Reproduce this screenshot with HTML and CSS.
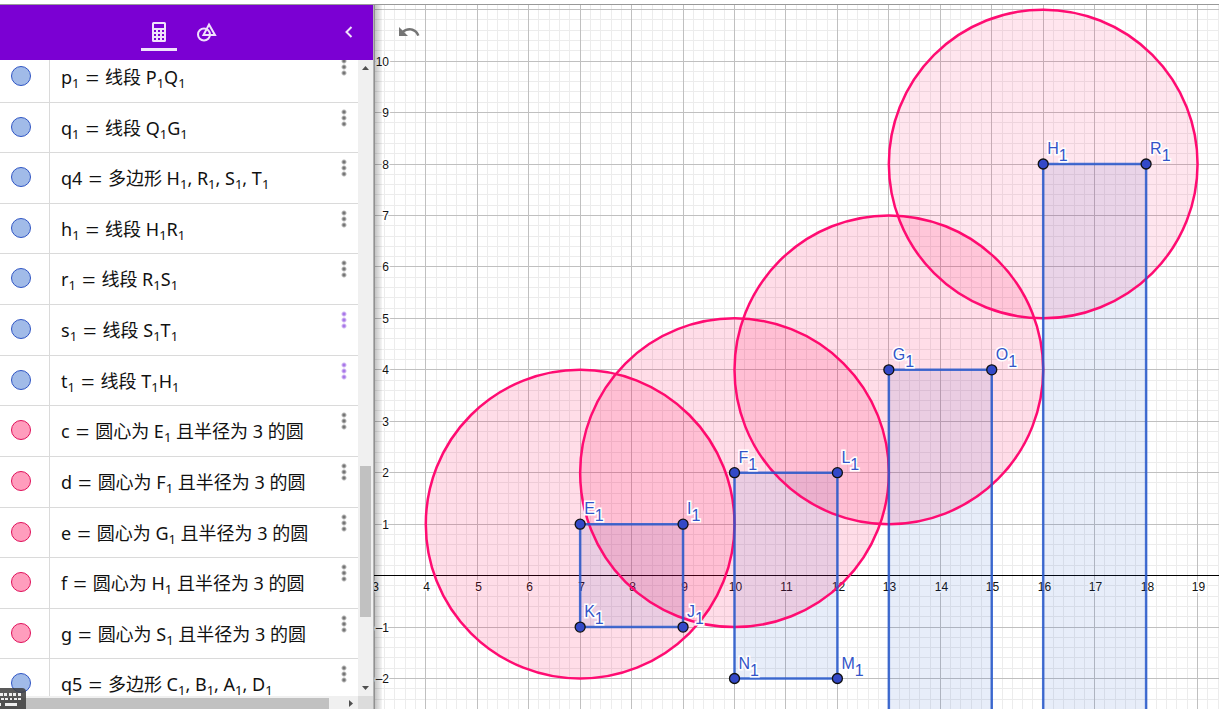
FILE: index.html
```
<!DOCTYPE html>
<html lang="zh-CN">
<head>
<meta charset="utf-8">
<title>GeoGebra</title>
<link rel="stylesheet" href="styles.css">
</head>
<body>
<div class="topbar"></div>
<div class="app">
  <aside class="panel">
    <header class="header">
      <nav class="tabs">
        <button class="tab tab-active" type="button" aria-label="代数">
          <svg width="24" height="24" viewBox="0 0 24 24"><path fill="currentColor" fill-rule="evenodd" d="M6.500 2h11A1.500 1.500 0 0 1 19 3.500v17a1.500 1.500 0 0 1-1.500 1.500h-11A1.500 1.500 0 0 1 5 20.500v-17A1.500 1.500 0 0 1 6.500 2zM7 4v4h10V4zM7 10v2h2v-2zM11 10v2h2v-2zM15 10v2h2v-2zM7 14v2h2v-2zM11 14v2h2v-2zM15 14v2h2v-2zM7 18v2h2v-2zM11 18v2h2v-2zM15 18v2h2v-2z"/></svg>
        </button>
        <button class="tab" type="button" aria-label="工具">
          <svg width="24" height="24" viewBox="0 0 24 24" fill="none" stroke="currentColor" stroke-width="2"><circle cx="9" cy="14.500" r="6"/><path d="M14 4.500L20 15H8.500z"/></svg>
        </button>
      </nav>
      <button class="collapse" type="button" aria-label="收起">
        <svg width="12" height="14" viewBox="0 0 12 14" fill="none" stroke="currentColor" stroke-width="2"><path d="M8.500 1L3.500 6l5 5"/></svg>
      </button>
    </header>
    <div class="body">
      <div class="viewport">
        <ul class="rows">
          <li class="row"><button class="marble" type="button" aria-label="显示 p1"></button><p class="def">p<sub>1</sub><i class="eq">=</i>线段 P<sub>1</sub>Q<sub>1</sub></p><button class="more" type="button" aria-label="更多"></button></li>
          <li class="row"><button class="marble" type="button" aria-label="显示 q1"></button><p class="def">q<sub>1</sub><i class="eq">=</i>线段 Q<sub>1</sub>G<sub>1</sub></p><button class="more" type="button" aria-label="更多"></button></li>
          <li class="row"><button class="marble" type="button" aria-label="显示 q4"></button><p class="def">q4<i class="eq">=</i>多边形 H<sub>1</sub>, R<sub>1</sub>, S<sub>1</sub>, T<sub>1</sub></p><button class="more" type="button" aria-label="更多"></button></li>
          <li class="row"><button class="marble" type="button" aria-label="显示 h1"></button><p class="def">h<sub>1</sub><i class="eq">=</i>线段 H<sub>1</sub>R<sub>1</sub></p><button class="more" type="button" aria-label="更多"></button></li>
          <li class="row"><button class="marble" type="button" aria-label="显示 r1"></button><p class="def">r<sub>1</sub><i class="eq">=</i>线段 R<sub>1</sub>S<sub>1</sub></p><button class="more" type="button" aria-label="更多"></button></li>
          <li class="row"><button class="marble" type="button" aria-label="显示 s1"></button><p class="def">s<sub>1</sub><i class="eq">=</i>线段 S<sub>1</sub>T<sub>1</sub></p><button class="more more-lit" type="button" aria-label="更多"></button></li>
          <li class="row"><button class="marble" type="button" aria-label="显示 t1"></button><p class="def">t<sub>1</sub><i class="eq">=</i>线段 T<sub>1</sub>H<sub>1</sub></p><button class="more more-lit" type="button" aria-label="更多"></button></li>
          <li class="row"><button class="marble marble-pink" type="button" aria-label="显示 c"></button><p class="def">c<i class="eq">=</i>圆心为 E<sub>1</sub> 且半径为 3 的圆</p><button class="more" type="button" aria-label="更多"></button></li>
          <li class="row"><button class="marble marble-pink" type="button" aria-label="显示 d"></button><p class="def">d<i class="eq">=</i>圆心为 F<sub>1</sub> 且半径为 3 的圆</p><button class="more" type="button" aria-label="更多"></button></li>
          <li class="row"><button class="marble marble-pink" type="button" aria-label="显示 e"></button><p class="def">e<i class="eq">=</i>圆心为 G<sub>1</sub> 且半径为 3 的圆</p><button class="more" type="button" aria-label="更多"></button></li>
          <li class="row"><button class="marble marble-pink" type="button" aria-label="显示 f"></button><p class="def">f<i class="eq">=</i>圆心为 H<sub>1</sub> 且半径为 3 的圆</p><button class="more" type="button" aria-label="更多"></button></li>
          <li class="row"><button class="marble marble-pink" type="button" aria-label="显示 g"></button><p class="def">g<i class="eq">=</i>圆心为 S<sub>1</sub> 且半径为 3 的圆</p><button class="more" type="button" aria-label="更多"></button></li>
          <li class="row"><button class="marble" type="button" aria-label="显示 q5"></button><p class="def">q5<i class="eq">=</i>多边形 C<sub>1</sub>, B<sub>1</sub>, A<sub>1</sub>, D<sub>1</sub></p><button class="more" type="button" aria-label="更多"></button></li>
        </ul>
      </div>
      <div class="vbar">
        <svg width="14" height="16" viewBox="0 0 14 16"><path fill="#505050" d="M4 10h7L7.500 6z"/></svg>
        <div class="vtrack"><div class="vthumb"></div></div>
        <svg width="14" height="16" viewBox="0 0 14 16"><path fill="#505050" d="M4 6h7L7.500 10z"/></svg>
      </div>
      <div class="hbar">
        <div class="hthumb"></div>
        <svg width="14" height="13" viewBox="0 0 14 13"><path fill="#505050" d="M5 4v7l4-3.500z"/></svg>
      </div>
      <div class="corner"></div>
    </div>
    <button class="keyboard" type="button" aria-label="键盘">
      <svg width="26" height="21" viewBox="0 0 26 21" fill="#eee"><path d="M0 5h3v3H0zM4 5h3v3H4zM9 5h3v3H9zM13 5h3v3h-3zM18 5h3v3h-3zM1 10h3v2H1zM5 10h3v2H5zM10 10h2v2h-2zM14 10h3v2h-3zM18 10h3v2h-3zM5 15h12v3H5zM0 15h1v3H0z"/></svg>
    </button>
  </aside>
  <main class="graphics">
    <svg class="plot" id="plot" role="img" aria-label="绘图区">
      <g id="grid"></g>
      <g id="axis"></g>
      <g transform="translate(-154 570.600)">
        <g class="boxes" transform="scale(51.450 -51.450)">
          <path d="M7 1h2v-2h-2z"/>
          <path d="M10 2h2v-4h-2z"/>
          <path d="M13 4h2v-12h-2z"/>
          <path d="M16 8h2v-16h-2z"/>
        </g>
        <g class="circles" transform="scale(51.450 -51.450)">
          <circle cx="7" cy="1" r="3"/>
          <circle cx="10" cy="2" r="3"/>
          <circle cx="13" cy="4" r="3"/>
          <circle class="pale" cx="16" cy="8" r="3"/>
        </g>
        <g class="edges" transform="scale(51.450 -51.450)">
          <path d="M7 1h2v-2h-2z"/>
          <path d="M10 2h2v-4h-2z"/>
          <path d="M13 4h2v-12h-2z"/>
          <path d="M16 8h2v-16h-2z"/>
        </g>
      </g>
      <g id="points"></g>
    </svg>
    <button class="undo" type="button" aria-label="撤销">
      <svg width="24" height="24" viewBox="0 0 24 24"><path fill="#757575" d="M12.500 8c-2.650 0-5.050.99-6.900 2.600L2 7v9h9l-3.620-3.620c1.390-1.160 3.160-1.880 5.120-1.880 3.540 0 6.550 2.310 7.600 5.500l2.370-.78C21.080 11.030 17.150 8 12.500 8z"/></svg>
    </button>
  </main>
</div>
<script src="plot.js"></script>
</body>
</html>
```
FILE: styles.css
```
* {
  box-sizing: border-box;
}

body {
  margin: 0;
  height: 100vh;
  display: flex;
  flex-direction: column;
  overflow: hidden;
  background: #fff;
  font-family: "Liberation Sans", "Noto Sans CJK SC", sans-serif;
}

button {
  border: 0;
  padding: 0;
  background: none;
}

svg {
  display: block;
}

.topbar {
  flex: none;
  height: 5px;
  border-bottom: 1px solid #999;
}

.app {
  flex: 1;
  min-height: 0;
  display: flex;
}

.panel {
  position: relative;
  flex: none;
  width: 374px;
  display: flex;
  flex-direction: column;
  border-right: 1px solid #b4b4b4;
}

.header {
  flex: none;
  height: 55px;
  display: flex;
  justify-content: center;
  align-items: center;
  background: #7b00d3;
  color: #f0e2fb;
}

.tabs {
  flex: 1;
  display: flex;
  justify-content: center;
  gap: 12px;
  padding-left: 23px;
}

.tab {
  width: 36px;
  height: 37px;
  display: flex;
  justify-content: center;
  padding-top: 6px;
  border-bottom: 3px solid transparent;
  color: inherit;
}

.tab-active {
  border-bottom-color: #f0e2fb;
}

.collapse {
  width: 12px;
  margin-right: 18px;
  color: inherit;
}

.body {
  flex: 1;
  min-height: 0;
  display: grid;
  grid-template-columns: 1fr 15px;
  grid-template-rows: 1fr 13px;
}

.viewport {
  overflow: hidden;
  min-height: 0;
}

.rows {
  list-style: none;
  min-height: 658px;
  margin: -8px 0 0;
  padding: 0;
  display: grid;
  grid-auto-rows: 1fr;
}

.row {
  display: grid;
  grid-template-columns: 50px 1fr 29px;
  align-items: start;
  border-bottom: 1px solid #dadada;
  background: linear-gradient(#dadada, #dadada) 49px 0 / 1px 100% no-repeat;
}

.marble {
  width: 20px;
  height: 20px;
  margin: 14px 0 0 11px;
  border: 1px solid #2f55c4;
  border-radius: 50%;
  background: #a1bbe8;
}

.marble-pink {
  border-color: #e0105a;
  background: #ff9dbd;
}

.def {
  margin: 0;
  padding: 11px 0 0 11px;
  font-family: "Noto Sans", "Noto Sans CJK SC", sans-serif;
  font-size: 18px;
  line-height: 28px;
  white-space: nowrap;
  color: #111;
}

.def sub {
  font-size: 13px;
  line-height: 1;
  vertical-align: -4px;
}

.eq {
  display: inline-block;
  margin: 0 6px;
  font-family: "Liberation Serif", serif;
  font-size: 24px;
  font-style: normal;
  line-height: 20px;
  vertical-align: -2px;
}

.more {
  width: 6px;
  height: 18px;
  margin: 6px 0 0 12px;
  background: radial-gradient(circle at 50% 50%, #757575 1px, transparent 3px) 0 0 / 6px 6px;
}

.more-lit {
  background-image: radial-gradient(circle at 50% 50%, #a877e8 1px, transparent 3px);
}

.vbar {
  display: flex;
  flex-direction: column;
  background: #f0f0f0;
}

.vtrack {
  flex: 1;
  display: grid;
  grid-template-rows: 390fr 151fr 63fr;
}

.vthumb {
  grid-row: 2;
  margin: 0 2px;
  background: #c1c1c1;
}

.hbar {
  display: flex;
  justify-content: space-between;
  background: #f0f0f0;
}

.hthumb {
  width: 92%;
  margin-top: 2px;
  background: #c1c1c1;
}

.corner {
  background: #dcdcdc;
}

.keyboard {
  position: absolute;
  left: 0;
  bottom: 0;
  border-radius: 0 4px 0 0;
  background: rgba(60, 60, 60, 0.85);
}

.graphics {
  position: relative;
  flex: 1;
  min-width: 0;
  overflow: hidden;
  background: #fff;
}

.graphics::after {
  content: "";
  position: absolute;
  inset: 0 auto 0 0;
  width: 8px;
  background: linear-gradient(90deg, rgba(0, 0, 0, 0.26), rgba(0, 0, 0, 0.04));
}

.plot {
  position: absolute;
  inset: 0;
  width: 100%;
  height: 100%;
}

.undo {
  position: absolute;
  left: 23px;
  top: 15px;
}

.minor {
  stroke: #ececec;
}

.major {
  stroke: #c0c0c0;
}

.zero {
  stroke: #000;
}

.tick {
  font-size: 12px;
  fill: #111;
  stroke: #fff;
  stroke-width: 3px;
  paint-order: stroke;
}

.boxes path {
  fill: rgba(21, 80, 192, 0.1);
}

.circles circle {
  fill: rgba(255, 0, 86, 0.135);
  stroke: #ff0c72;
  stroke-width: 2.5px;
  vector-effect: non-scaling-stroke;
}

.circles .pale {
  fill: rgba(255, 0, 86, 0.1);
}

.edges path {
  fill: none;
  stroke: rgba(38, 88, 204, 0.85);
  stroke-width: 2.5px;
  vector-effect: non-scaling-stroke;
}

.point {
  fill: #3349c8;
  stroke: #111;
  stroke-width: 1.3px;
}

.name {
  font-size: 16px;
  fill: #3355c8;
  stroke: #fff;
  stroke-width: 3px;
  paint-order: stroke;
}
```
FILE: plot.js
```
const NS = "http://www.w3.org/2000/svg";
const UNIT = 51.45;
const ORIGIN = { x: -154, y: 570.6 };
const plot = document.getElementById("plot");
const grid = document.getElementById("grid");
const axis = document.getElementById("axis");
const points = document.getElementById("points");

function add(parent, tag, attrs, text) {
  const el = document.createElementNS(NS, tag);
  for (const key in attrs) el.setAttribute(key, attrs[key]);
  if (text !== undefined) el.textContent = text;
  parent.appendChild(el);
  return el;
}

const px = (u) => ORIGIN.x + u * UNIT;
const py = (v) => ORIGIN.y - v * UNIT;
const crisp = (n) => Math.floor(n) + 0.5;
const label = (n) => String(n).replace("-", "–");

function drawGrid() {
  grid.replaceChildren();
  axis.replaceChildren();
  const w = plot.clientWidth;
  const h = plot.clientHeight;
  const left = Math.ceil(-ORIGIN.x / UNIT * 5);
  const right = Math.floor((w - ORIGIN.x) / UNIT * 5);
  const top = Math.floor(ORIGIN.y / UNIT * 5);
  const bottom = Math.ceil((ORIGIN.y - h) / UNIT * 5);

  for (const kind of ["minor", "major"]) {
    const wanted = (i) => (i % 5 === 0) === (kind === "major");
    for (let i = left; i <= right; i++) {
      const x = crisp(px(i / 5));
      if (wanted(i)) add(grid, "line", { class: kind, x1: x, x2: x, y1: 0, y2: h });
    }
    for (let i = bottom; i <= top; i++) {
      const y = crisp(py(i / 5));
      if (wanted(i)) add(grid, "line", { class: kind, x1: 0, x2: w, y1: y, y2: y });
    }
  }
  const zero = crisp(py(0));
  add(axis, "line", { class: "zero", x1: 0, x2: w, y1: zero, y2: zero });

  for (let u = Math.floor(left / 5); u <= right / 5; u++) {
    add(axis, "text", { class: "tick", x: crisp(px(u)) + 1, y: zero + 15.5, "text-anchor": "middle" }, label(u));
  }
  for (let v = Math.ceil(bottom / 5); v <= 10; v++) {
    if (v !== 0) add(axis, "text", { class: "tick", x: 15, y: Math.floor(py(v)) + 5, "text-anchor": "end" }, label(v));
  }
}

[
  ["E", 7, 1], ["I", 9, 1], ["J", 9, -1], ["K", 7, -1],
  ["F", 10, 2], ["L", 12, 2], ["M", 12, -2], ["N", 10, -2],
  ["G", 13, 4], ["O", 15, 4], ["H", 16, 8], ["R", 18, 8]
].forEach(([name, u, v]) => {
  add(points, "circle", { class: "point", cx: px(u), cy: py(v), r: 5 });
  const text = add(points, "text", { class: "name", x: px(u) + 4, y: Math.round(py(v)) - 10 }, name);
  add(text, "tspan", { dy: 7 }, "1");
});

drawGrid();
window.addEventListener("resize", drawGrid);
```
